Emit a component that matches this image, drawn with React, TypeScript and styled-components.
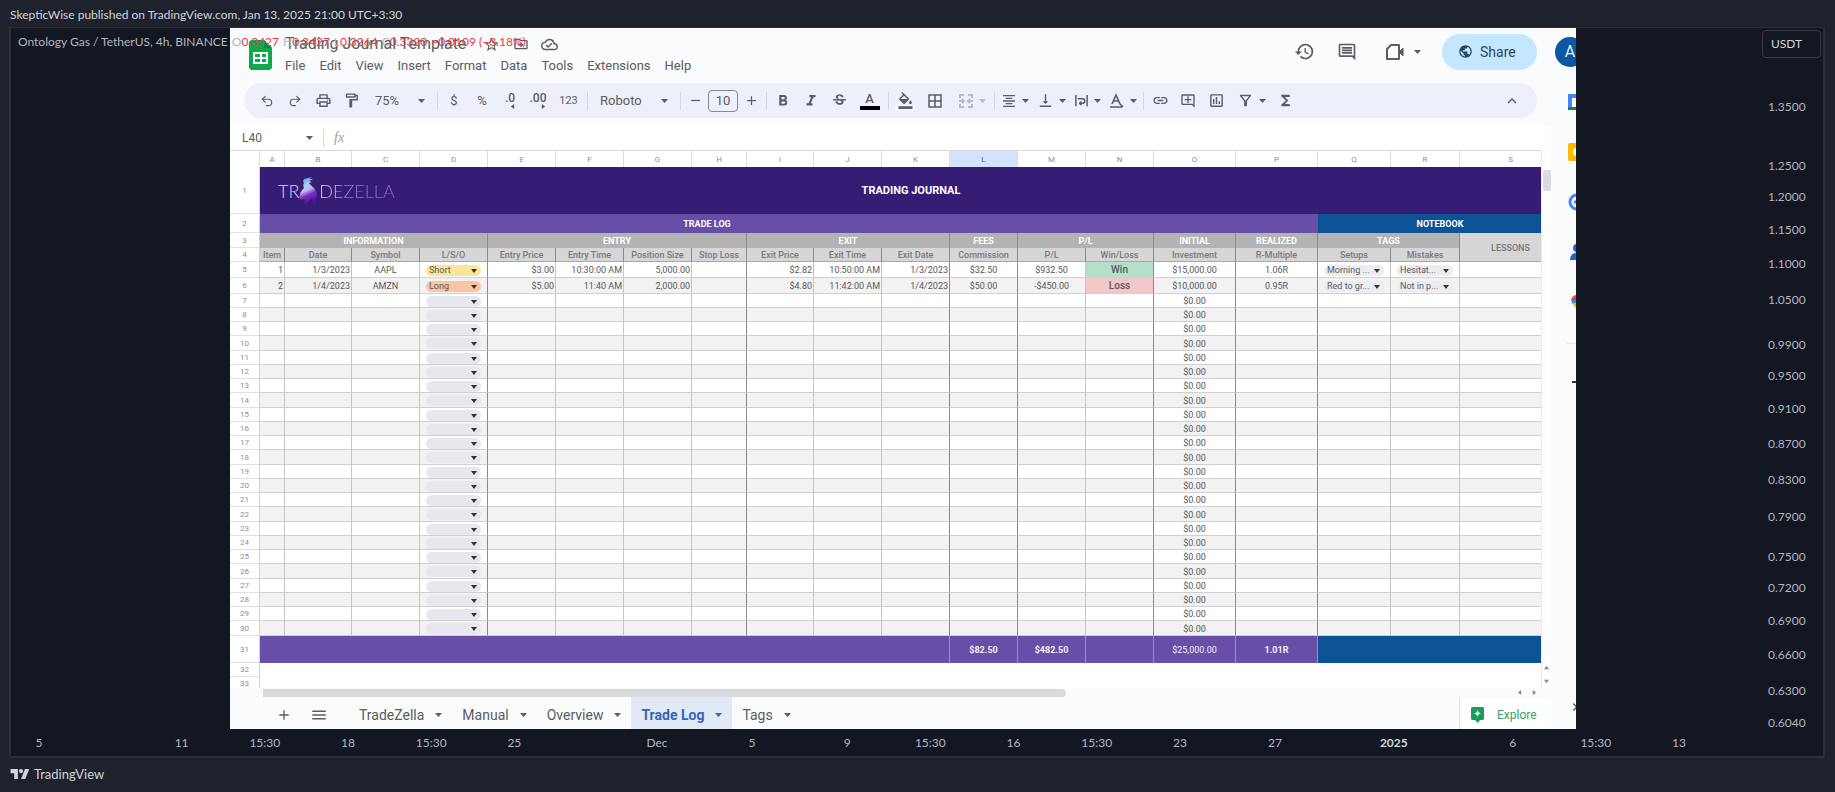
import React from "react";
import styled, { createGlobalStyle, css } from "styled-components";
import { Undo2, Redo2 } from "lucide-react";
import {
  MdOutlinePrint,
  MdOutlineFormatPaint,
  MdStrikethroughS,
  MdFormatBold,
  MdFormatItalic,
  MdFormatColorFill,
  MdBorderAll,
  MdFormatAlignCenter,
  MdVerticalAlignBottom,
  MdInsertLink,
  MdOutlineAddComment,
  MdOutlineInsertChart,
  MdOutlineFilterAlt,
  MdFunctions,
  MdKeyboardArrowUp,
  MdChevronRight,
  MdHistory,
  MdOutlineComment,
  MdPublic,
  MdStarBorder,
  MdOutlineDriveFileMove,
  MdOutlineCloudDone,
  MdAdd,
  MdRemove,
  MdMenu,
} from "react-icons/md";

const GlobalStyle = createGlobalStyle`
  * { box-sizing: border-box; }
  body { margin: 0; background: #1e222d; }
  button, input, select { font: inherit; color: inherit; margin: 0; }
`;

/* ---------- Chart page ---------- */

const Page = styled.div`
  display: flex;
  flex-direction: column;
  min-height: 100vh;
  color: #b2b5be;
  background: #1e222d;
  font: 12px/16px Lato, sans-serif;
`;

const PublishedBy = styled.header`
  height: 27px;
  padding: 7px 10px 0;
  color: #d1d4dc;
  white-space: nowrap;
`;

const Frame = styled.main`
  position: relative;
  margin: 0 10px 0 9px;
  border: 2px solid #2a2e39;
  border-top-width: 1px;
  background: #131722;
`;

const Plot = styled.div`
  display: grid;
  grid-template-columns: 219px minmax(0, 1fr) 247px;
`;

const Legend = styled.div`
  position: absolute;
  top: 6px;
  left: 7px;
  display: flex;
  gap: 4px;
  white-space: nowrap;
`;

const Red = styled.span`
  color: #f23645;
`;

const PriceScale = styled.aside`
  grid-column: 3;
  display: flex;
  flex-direction: column;
  align-items: flex-end;
`;

const CurrencyButton = styled.button`
  width: 59px;
  height: 28px;
  margin: 2px 2px 0 0;
  padding: 0 8px;
  border: 1px solid #363a45;
  border-radius: 4px;
  background: none;
  color: #d1d4dc;
  text-align: left;
`;

const Prices = styled.div`
  flex: 1;
  display: flex;
  flex-direction: column;
  width: 61px;
  padding: 49px 0 6px 6px;
`;

const PriceTick = styled.div<{ $gap: number }>`
  flex: ${(p) => p.$gap} 1 0;
  display: flex;
  align-items: flex-end;
  min-height: 0;

  span {
    display: flex;
    align-items: center;
    height: 0;
  }
`;

const TimeScale = styled.div`
  display: flex;
  align-items: center;
  height: 27px;
  padding: 0 144px 0 28px;
`;

const TimeTick = styled.div<{ $gap: number; $strong?: boolean }>`
  flex: ${(p) => p.$gap} 1 0;
  display: flex;
  justify-content: flex-end;
  min-width: 0;
  ${(p) => p.$strong && "color: #d1d4dc; font-weight: 700;"}

  span {
    display: flex;
    justify-content: center;
    width: 0;
    white-space: nowrap;
  }
`;

const Footer = styled.footer`
  display: flex;
  align-items: center;
  gap: 4px;
  padding: 8px 10px;
  color: #d1d4dc;
  font-size: 13px;
`;

/* ---------- Spreadsheet window ---------- */

const Sheet = styled.section`
  grid-column: 2;
  display: flex;
  flex-direction: column;
  overflow: hidden;
  background: #fafbfc;
  color: #5a5d61;
  font: 13px/16px Roboto, sans-serif;
`;

const TopBar = styled.div`
  display: flex;
  height: 55px;
  padding-left: 19px;
  overflow: hidden;
`;

const SheetsLogo = styled.svg`
  flex: none;
  width: 23px;
  height: 30px;
  margin: 12px 13px 0 0;
`;

const Titles = styled.div`
  flex: 1;
  min-width: 0;
`;

const TitleRow = styled.div`
  display: flex;
  align-items: center;
  height: 20px;
  margin-top: 6px;
`;

const Title = styled.h1`
  margin: 0 11px 0 0;
  font-size: 16px;
  font-weight: 400;
  line-height: 20px;
  white-space: nowrap;
`;

const TitleIcon = styled.button`
  display: grid;
  place-items: center;
  width: 29px;
  padding: 0;
  border: 0;
  background: none;
`;

const Menus = styled.nav`
  display: flex;
  gap: 14px;
  margin-top: 4px;
`;

const MenuButton = styled.button`
  padding: 0;
  border: 0;
  background: none;
`;

const Account = styled.div`
  flex: none;
  display: flex;
  align-items: center;
  width: 293px;
  height: 47px;
`;

const AccountButton = styled.button<{ $w: number }>`
  flex: none;
  display: flex;
  align-items: center;
  justify-content: center;
  gap: 9px;
  width: ${(p) => p.$w}px;
  padding: 0;
  border: 0;
  background: none;
`;

const ShareButton = styled.button`
  flex: none;
  display: flex;
  align-items: center;
  gap: 7px;
  width: 95px;
  height: 36px;
  margin: 0 18px 0 5px;
  padding: 0 0 0 16px;
  border: 0;
  border-radius: 18px;
  background: #c2e7ff;
  color: #2b4560;
  font-size: 14px;
`;

const Avatar = styled.button`
  flex: none;
  width: 30px;
  height: 30px;
  padding: 0;
  border: 0;
  border-radius: 50%;
  background: #0b57a0;
  color: #e4eefa;
  font-size: 16px;
`;

const Workspace = styled.div`
  flex: 1;
  display: grid;
  grid-template-columns: minmax(0, 1fr) 25px;
`;

const Editor = styled.div`
  min-width: 0;
`;

const Toolbar = styled.div`
  display: flex;
  align-items: center;
  height: 35px;
  margin: 0 14px 7px;
  padding: 0 11px 0 9px;
  border-radius: 18px;
  background: #edf0fa;
`;

const Tool = styled.button<{ $w?: number; $push?: boolean; $faint?: boolean }>`
  flex: none;
  display: flex;
  align-items: center;
  justify-content: center;
  gap: 5px;
  width: ${(p) => p.$w ?? 28}px;
  height: 28px;
  padding: 0;
  border: 0;
  background: none;
  ${(p) => p.$push && "margin-left: auto;"}
  ${(p) => p.$faint && "opacity: 0.35;"}
`;

const Picker = styled.button<{ $w: number }>`
  flex: none;
  display: flex;
  align-items: center;
  justify-content: space-between;
  width: ${(p) => p.$w}px;
  padding: 0 10px;
  border: 0;
  background: none;
`;

const Divider = styled.span`
  flex: none;
  width: 1px;
  height: 18px;
  margin: 0 2px;
  background: #d5d8e0;
`;

const SizeInput = styled.input`
  flex: none;
  width: 30px;
  height: 22px;
  padding: 0;
  border: 1px solid #85888d;
  border-radius: 4px;
  background: none;
  text-align: center;
`;

const Swatch = styled.span<{ $colour: string }>`
  display: grid;
  justify-items: center;
  width: 20px;
  height: 18px;
  border-bottom: 4px solid ${(p) => p.$colour};
  font-size: 13px;
  font-weight: 500;
  line-height: 14px;
`;

const Decimals = styled.span`
  display: grid;
  justify-items: end;
  font-size: 12px;
  font-weight: 500;
  line-height: 11px;
`;

const FormulaBar = styled.div`
  display: flex;
  align-items: center;
  gap: 8px;
  height: 25px;
  padding-left: 12px;
  background: #fff;
`;

const NameBox = styled.input`
  width: 56px;
  padding: 0;
  border: 0;
  background: none;
  font-size: 12px;
`;

const Fx = styled.label`
  color: #9a9da1;
  font: italic 14px/16px "Liberation Serif", serif;
`;

const FormulaInput = styled.input`
  flex: 1;
  min-width: 0;
  border: 0;
  background: none;
`;

const GridArea = styled.div`
  display: flex;
  height: 538px;
`;

const GridClip = styled.div`
  flex: 1;
  min-width: 0;
  overflow: hidden;
`;

const VerticalScroll = styled.div`
  display: flex;
  flex-direction: column;
  align-items: center;
  gap: 9px;
  width: 10px;
  padding: 20px 0 4px;
  border-left: 1px solid #ececee;
  background: #fdfdfd;
  color: #8a8d91;
`;

const VerticalThumb = styled.span`
  width: 8px;
  height: 21px;
  margin-bottom: auto;
  border-radius: 2px;
  background: #dadbe2;
`;

const HorizontalScroll = styled.div`
  display: flex;
  align-items: center;
  gap: 10px;
  height: 9px;
  padding: 0 14px 0 33px;
  color: #8a8d91;
`;

const HorizontalThumb = styled.span`
  width: 63%;
  height: 8px;
  margin-right: auto;
  border-radius: 0 4px 4px 0;
  background: #dadbdf;
`;

const Table = styled.table`
  width: calc(100% + 21px);
  border-collapse: separate;
  border-spacing: 0;
  table-layout: fixed;
  color: #55585c;
  font-size: 9px;
  line-height: 12px;

  th,
  td {
    padding: 1px 1px 0;
    overflow: hidden;
    text-align: center;
    white-space: nowrap;
    font-weight: 400;
  }
`;

const LetterRow = styled.tr`
  height: 17px;
  background: #fff;
  color: #8c8f93;
  font-size: 8px;
`;

const Letter = styled.th<{ $active?: boolean }>`
  border-top: 1px solid #d9dadc;
  border-right: 1px solid #dcdddf;
  ${(p) => p.$active && "background: #d3e3fd; color: #2f5a96;"}
`;

const RowNumber = styled.th`
  border-right: 1px solid #d0d1d3;
  border-bottom: 1px solid #e0e1e3;
  background: #fff;
  color: #8c8f93;
  font-size: 8px;
`;

const Row = styled.tr<{ $h: number; $shade?: boolean }>`
  height: ${(p) => p.$h}px;
  background: ${(p) => (p.$shade ? "#f2f2f2" : "#fff")};
`;

const Banner = styled.th<{ $bg: string }>`
  && {
    background: ${(p) => p.$bg};
    color: #fff;
    font-weight: 700;
  }
`;

const BrandRow = styled.div`
  display: grid;
  grid-template-columns: 1fr auto 1fr;
  align-items: center;
  font-size: 11px;
`;

const edge = css<{ $strong?: boolean }>`
  border-right: 1px solid ${(p) => (p.$strong ? "#8a8a8a" : "#c4c4c6")};
`;

const Group = styled.th<{ $strong?: boolean }>`
  ${edge}
  && {
    background: #b3b3b3;
    color: #fff;
    font-weight: 700;
  }
`;

const Heading = styled.th<{ $strong?: boolean }>`
  ${edge}
  && {
    padding: 1px 0 0;
    border-bottom: 1px solid #a9a9a9;
    background: #d6d6d6;
    color: #77797c;
    font-weight: 500;
  }
`;

const Cell = styled.td<{ $strong?: boolean; $right?: boolean; $bg?: string }>`
  ${edge}
  border-bottom: 1px solid #d0d0d3;
  && {
    ${(p) => p.$right && "text-align: right;"}
    ${(p) => p.$bg && `background: ${p.$bg}; font-size: 10px; font-weight: 500;`}
  }
`;

const Total = styled.td<{ $bg: string; $line?: boolean; $bold?: boolean }>`
  && {
    border-right: 1px solid ${(p) => (p.$line ? "#9d8cc9" : p.$bg)};
    background: ${(p) => p.$bg};
    color: #f1eef8;
    font-weight: ${(p) => (p.$bold ? 700 : 400)};
  }
`;

const Chip = styled.span<{ $bg: string }>`
  position: relative;
  display: block;
  height: 11px;
  margin: 0 5px;
  border-radius: 6px;
  background: ${(p) => p.$bg};

  select {
    display: block;
    width: 100%;
    height: 11px;
    padding: 0 0 0 3px;
    border: 0;
    background: none;
    appearance: none;
    line-height: 11px;
  }

  svg {
    position: absolute;
    top: 4px;
    right: 4px;
    color: #333;
    pointer-events: none;
  }
`;

const Wordmark = styled.span`
  display: flex;
  align-items: center;
  padding-left: 17px;
  color: #dccdf3;
  font: 300 18px/28px Lato, sans-serif;
`;

const Fade = styled.span`
  background: linear-gradient(90deg, #eadcf8, #c7b4ee 20%, #7c8fe0 36%, #7a78d4 65%, #9a66d2);
  background-clip: text;
  color: transparent;
`;

const SheetTabs = styled.nav`
  display: flex;
  align-items: center;
  height: 32px;
  padding-left: 40px;
  font-size: 14px;
`;

const TabIcon = styled.button`
  display: grid;
  place-items: center;
  width: 28px;
  height: 32px;
  margin-right: 7px;
  padding: 4px 0 0;
  border: 0;
  background: none;
`;

const TabList = styled.div`
  display: flex;
  margin-left: 9px;
`;

const Tab = styled.button<{ $active?: boolean }>`
  display: flex;
  align-items: center;
  gap: 11px;
  height: 32px;
  padding: 4px 10px 0;
  border: 0;
  background: ${(p) => (p.$active ? "#e1e9f7" : "none")};
  ${(p) => p.$active && "color: #3565b8; font-weight: 700;"}
`;

const Explore = styled.button`
  display: flex;
  align-items: center;
  gap: 13px;
  width: 92px;
  height: 32px;
  margin-left: auto;
  padding: 4px 0 0 11px;
  border: 0;
  border-left: 1px solid #dcdddf;
  background: #fff;
  color: #34a06c;
  font-size: 12px;
`;

const SidePanel = styled.aside`
  display: flex;
  flex-direction: column;
  align-items: flex-start;
  padding: 10px 0 14px 16px;
  overflow: hidden;
`;

const SideApps = styled.div`
  display: grid;
  gap: 32px;
`;

const SideRule = styled.hr`
  width: 20px;
  margin: 32px 0 26px;
  border: 0;
  border-top: 1px solid #e3e4e6;
`;

const SideToggle = styled.button`
  margin-top: auto;
  padding: 0;
  border: 0;
  background: none;

  svg {
    display: block;
  }
`;

/* ---------- Drawings ---------- */

const Caret = ({ size = 7 }: { size?: number }) => (
  <svg width={size} height={4} viewBox="0 0 8 4" preserveAspectRatio="none" fill="currentColor" aria-hidden>
    <path d="M0 0h8L4 4z" />
  </svg>
);

const Arrow = ({ turn }: { turn: number }) => (
  <svg width="5" height="5" viewBox="0 0 6 6" fill="currentColor" aria-hidden>
    <path d="M0 5h6L3 1z" transform={`rotate(${turn} 3 3)`} />
  </svg>
);

const MergeIcon = () => (
  <svg width="16" height="16" viewBox="0 0 16 16" fill="none" stroke="currentColor" strokeWidth="2" aria-hidden>
    <path d="M6 2H2v3M10 2h4v3M6 14H2v-3M10 14h4v-3M1 8h5M15 8h-5M4 6l2 2-2 2M12 6l-2 2 2 2" />
  </svg>
);

const WrapIcon = () => (
  <svg width="15" height="15" viewBox="0 0 16 16" fill="none" stroke="currentColor" strokeWidth="1.6" aria-hidden>
    <path d="M2 2v12M14 2v12M4 6h5a2.500 2.500 0 0 1 0 5H6M8 9l-2 2 2 2" />
  </svg>
);

const RotateIcon = () => (
  <svg width="16" height="16" viewBox="0 0 16 16" fill="none" stroke="currentColor" strokeWidth="1.6" aria-hidden>
    <path d="M3 11L7 2l4 9M4.500 8h5M1 14h12M11 11l3 3" />
  </svg>
);

const VideoIcon = () => (
  <svg width="20" height="18" viewBox="0 0 20 18" fill="none" stroke="currentColor" strokeWidth="2" aria-hidden>
    <path d="M6 2h8v14H2V6z" strokeLinejoin="round" />
    <path d="M15 8l3-3v8l-3-3z" fill="currentColor" strokeWidth="1" />
  </svg>
);

const TradingViewMark = () => (
  <svg width="20" height="10" viewBox="0 0 36 19" fill="#d1d4dc" aria-hidden>
    <path d="M14 19H7V8H0V0h14zM28 19h-8l7.500-19h8z" />
    <circle cx="20" cy="4" r="4" />
  </svg>
);

const Figure = () => (
  <svg width="20" height="28" viewBox="0 0 20 28" aria-hidden>
    <defs>
      <linearGradient id="figure" x1="0" y1="0" x2="0.3" y2="1">
        <stop offset="0" stopColor="#3a86dc" />
        <stop offset="0.35" stopColor="#a9cdf5" />
        <stop offset="0.55" stopColor="#c6bff2" />
        <stop offset="0.75" stopColor="#7b2fc4" />
        <stop offset="1" stopColor="#4d1c98" />
      </linearGradient>
    </defs>
    <path
      fill="url(#figure)"
      d="M5 2l8-2-3 2 4 0-4 2 3 1-3 1c1 2 3 3 5 5 2 2 3 5 3 9l-2 1 1 6h-2l-2-5-3 1-2 4H5l1-5-4 1c-2-1-2-3-1-5 0-3 2-5 4-7-1-2-1-4 0-5l-1-2z"
    />
  </svg>
);

const ExploreIcon = () => (
  <svg width="13" height="16" viewBox="0 0 13 16" aria-hidden>
    <path fill="#1b9c5a" d="M1 0h11l1 1v11l-1 1H9l-2 3-3-3H1l-1-1V1z" />
    <path fill="#fff" d="M6.500 3l1 2.500 2.500 1-2.500 1-1 2.500-1-2.500-2.500-1 2.500-1z" />
  </svg>
);

/* ---------- Data ---------- */

const quotes = [
  ["O", "0.3427"],
  ["H", "0.3427"],
  ["L", "0.3264"],
  ["C", "0.3320"],
];

const prices = [
  1.35, 1.25, 1.2, 1.15, 1.1, 1.05, 0.99, 0.95, 0.91, 0.87, 0.83, 0.79, 0.75, 0.72, 0.69, 0.66, 0.63, 0.604,
];

const times: [string, number][] = [
  ["5", 0], ["11", 12], ["15:30", 7], ["18", 7], ["15:30", 7], ["25", 7], ["Dec", 12], ["5", 8], ["9", 8],
  ["15:30", 7], ["16", 7], ["15:30", 7], ["23", 7], ["27", 8], ["2025", 10], ["6", 10], ["15:30", 7], ["13", 7],
];

const menus = ["File", "Edit", "View", "Insert", "Format", "Data", "Tools", "Extensions", "Help"];
const tabs = ["TradeZella", "Manual", "Overview", "Trade Log", "Tags"];

const letters = "ABCDEFGHIJKLMNOPQRS".split("");
const widths = [30, 25, 67, 68, 68, 68, 68, 68, 55, 67, 68, 68, 68, 68, 68, 82, 82, 73, 69, 102];
const strongEdges = "DHKLNOP";
const rightAligned = "ABEFGHIJK";

const groups: [string, number][] = [
  ["INFORMATION", 4], ["ENTRY", 4], ["EXIT", 3], ["FEES", 1], ["P/L", 2], ["INITIAL", 1], ["REALIZED", 1], ["TAGS", 2],
];

const headings = [
  "Item", "Date", "Symbol", "L/S/O", "Entry Price", "Entry Time", "Position Size", "Stop Loss", "Exit Price",
  "Exit Time", "Exit Date", "Commission", "P/L", "Win/Loss", "Investment", "R-Multiple", "Setups", "Mistakes",
];

const trades = [
  ["1", "1/3/2023", "AAPL", "Short", "$3.00", "10:30:00 AM", "5,000.00", "", "$2.82", "10:50:00 AM", "1/3/2023",
    "$32.50", "$932.50", "Win", "$15,000.00", "1.06R", "Morning ...", "Hesitat...", ""],
  ["2", "1/4/2023", "AMZN", "Long", "$5.00", "11:40 AM", "2,000.00", "", "$4.80", "11:42:00 AM", "1/4/2023",
    "$50.00", "-$450.00", "Loss", "$10,000.00", "0.95R", "Red to gr...", "Not in p...", ""],
];

const blankTrade = letters.map((letter) => (letter === "O" ? "$0.00" : ""));
const logRows = [...trades, ...Array.from({ length: 24 }, () => blankTrade)];

const chipColours: Record<string, string> = { Short: "#fde49b", Long: "#fbc5a2", "": "#e7e7ee" };
const resultColours: Record<string, string> = { Win: "#b4dfc9", Loss: "#f2c7c9" };

const INDIGO = "#351c75";
const PURPLE = "#674ea7";
const BLUE = "#0b5394";

/* Most log rows are 14px tall, with a 15px one closing each run of four. */
const rowHeight = (index: number) => (index < 2 ? 16 : (index - 1) % 4 === 0 ? 15 : 14);

/* ---------- Parts ---------- */

const ChipSelect = ({ value, label, bg }: { value: string; label: string; bg: string }) => (
  <Chip $bg={bg}>
    <select aria-label={label} defaultValue={value}>
      <option value={value}>{value}</option>
    </select>
    <Caret size={6} />
  </Chip>
);

const LogCell = ({ letter, value, row }: { letter: string; value: string; row: number }) => {
  const strong = strongEdges.includes(letter);
  if (letter === "D") {
    return (
      <Cell $strong={strong}>
        <ChipSelect value={value} label={`Side, row ${row}`} bg={chipColours[value]} />
      </Cell>
    );
  }
  if ((letter === "Q" || letter === "R") && value) {
    return (
      <Cell>
        <ChipSelect value={value} label={`Tag ${letter}, row ${row}`} bg="#ededf1" />
      </Cell>
    );
  }
  return (
    <Cell $strong={strong} $right={rightAligned.includes(letter)} $bg={resultColours[value]}>
      {value}
    </Cell>
  );
};

const TradeLog = () => (
  <Table>
    <colgroup>
      {widths.map((width, i) => (
        <col key={i} width={width} />
      ))}
    </colgroup>
    <thead>
      <LetterRow>
        <Letter aria-label="Corner" />
        {letters.map((letter) => (
          <Letter key={letter} $active={letter === "L"}>{letter}</Letter>
        ))}
      </LetterRow>
    </thead>
    <tbody>
      <Row $h={47}>
        <RowNumber>1</RowNumber>
        <Banner $bg={INDIGO} colSpan={19}>
          <BrandRow>
            <Wordmark>
              TR
              <Figure />
              <Fade>DEZELLA</Fade>
            </Wordmark>
            TRADING JOURNAL
          </BrandRow>
        </Banner>
      </Row>
      <Row $h={19}>
        <RowNumber>2</RowNumber>
        <Banner $bg={PURPLE} colSpan={14}>TRADE LOG</Banner>
        <Banner $bg={PURPLE} colSpan={2} />
        <Banner $bg={BLUE} colSpan={3}>NOTEBOOK</Banner>
      </Row>
      <Row $h={15}>
        <RowNumber>3</RowNumber>
        {groups.map(([name, span]) => (
          <Group key={name} colSpan={span} $strong>{name}</Group>
        ))}
        <Heading rowSpan={2}>LESSONS</Heading>
      </Row>
      <Row $h={14}>
        <RowNumber>4</RowNumber>
        {headings.map((name, i) => (
          <Heading key={name + i} $strong>{name}</Heading>
        ))}
      </Row>
      {logRows.map((trade, i) => (
        <Row key={i} $h={rowHeight(i)} $shade={i % 2 === 1}>
          <RowNumber>{i + 5}</RowNumber>
          {trade.map((value, c) => (
            <LogCell key={c} letter={letters[c]} value={value} row={i + 5} />
          ))}
        </Row>
      ))}
      <Row $h={27}>
        <RowNumber>31</RowNumber>
        <Total $bg={PURPLE} $line colSpan={11} />
        <Total $bg={PURPLE} $line $bold>$82.50</Total>
        <Total $bg={PURPLE} $line $bold>$482.50</Total>
        <Total $bg={PURPLE} $line />
        <Total $bg={PURPLE} $line>$25,000.00</Total>
        <Total $bg={PURPLE} $line $bold>1.01R</Total>
        <Total $bg={BLUE} colSpan={3} />
      </Row>
      <Row $h={14}>
        <RowNumber>32</RowNumber>
        <td colSpan={19} />
      </Row>
      <Row $h={14}>
        <RowNumber>33</RowNumber>
        <td colSpan={19} />
      </Row>
    </tbody>
  </Table>
);

const FormatToolbar = () => (
  <Toolbar role="toolbar" aria-label="Formatting">
    <Tool aria-label="Undo"><Undo2 size={14} /></Tool>
    <Tool aria-label="Redo"><Redo2 size={14} /></Tool>
    <Tool aria-label="Print"><MdOutlinePrint size={17} /></Tool>
    <Tool aria-label="Paint format"><MdOutlineFormatPaint size={17} /></Tool>
    <Picker $w={70}>75%<Caret /></Picker>
    <Divider />
    <Tool>$</Tool>
    <Tool>%</Tool>
    <Tool aria-label="Decrease decimals"><Decimals>.0<Arrow turn={-90} /></Decimals></Tool>
    <Tool aria-label="Increase decimals"><Decimals>.00<Arrow turn={90} /></Decimals></Tool>
    <Tool $w={33}><small>123</small></Tool>
    <Divider />
    <Picker $w={88}>Roboto<Caret /></Picker>
    <Divider />
    <Tool $w={25} aria-label="Smaller"><MdRemove size={15} /></Tool>
    <SizeInput aria-label="Font size" defaultValue="10" />
    <Tool $w={26} aria-label="Larger"><MdAdd size={15} /></Tool>
    <Divider />
    <Tool aria-label="Bold"><MdFormatBold size={18} /></Tool>
    <Tool aria-label="Italic"><MdFormatItalic size={18} /></Tool>
    <Tool aria-label="Strikethrough"><MdStrikethroughS size={17} /></Tool>
    <Tool $w={33} aria-label="Text colour"><Swatch $colour="#000">A</Swatch></Tool>
    <Divider />
    <Tool aria-label="Fill colour"><Swatch $colour="#fff"><MdFormatColorFill size={17} /></Swatch></Tool>
    <Tool $w={32} aria-label="Borders"><MdBorderAll size={18} /></Tool>
    <Tool $w={41} $faint aria-label="Merge cells"><MergeIcon /><Caret /></Tool>
    <Divider />
    <Tool $w={36} aria-label="Align"><MdFormatAlignCenter size={16} /><Caret /></Tool>
    <Tool $w={36} aria-label="Vertical align"><MdVerticalAlignBottom size={17} /><Caret /></Tool>
    <Tool $w={36} aria-label="Wrap"><WrapIcon /><Caret /></Tool>
    <Tool $w={36} aria-label="Rotate"><RotateIcon /><Caret /></Tool>
    <Divider />
    <Tool aria-label="Link"><MdInsertLink size={17} /></Tool>
    <Tool aria-label="Comment"><MdOutlineAddComment size={16} /></Tool>
    <Tool aria-label="Chart"><MdOutlineInsertChart size={17} /></Tool>
    <Tool $w={42} aria-label="Filter"><MdOutlineFilterAlt size={17} /><Caret /></Tool>
    <Tool $w={26} aria-label="Functions"><MdFunctions size={17} /></Tool>
    <Tool $push aria-label="Hide menus"><MdKeyboardArrowUp size={18} /></Tool>
  </Toolbar>
);

const SideIcons = () => (
  <SidePanel aria-label="Side panel">
    <SideApps>
      <svg width="18" height="18" viewBox="0 0 18 18" aria-hidden>
        <path fill="#4285f4" d="M1 1h16v16H1z" />
        <path fill="#fff" d="M5 5h10v9H5z" />
        <path fill="#188038" d="M1 14h16v3H1z" />
      </svg>
      <svg width="18" height="18" viewBox="0 0 18 18" aria-hidden>
        <rect x="1" width="17" height="18" rx="2" fill="#fbbc04" />
        <circle cx="10" cy="9" r="4" fill="#fff" />
      </svg>
      <svg width="18" height="18" viewBox="0 0 18 18" fill="none" stroke="#4285f4" strokeWidth="3" aria-hidden>
        <circle cx="10" cy="9" r="7" />
        <path d="M7 9h6" />
      </svg>
      <svg width="18" height="18" viewBox="0 0 18 18" fill="#1a66d2" aria-hidden>
        <circle cx="10" cy="5" r="4" />
        <path d="M3 17c0-5 3-7 7-7v7z" />
      </svg>
      <svg width="18" height="18" viewBox="0 0 18 18" aria-hidden>
        <path fill="#ea4335" d="M4 8a6 6 0 0 1 12 0z" />
        <path fill="#4285f4" d="M5 7h4v4H5z" />
        <path fill="#fbbc04" d="M5 10h9l-4 7z" />
      </svg>
    </SideApps>
    <SideRule />
    <MdAdd size={24} color="#333" />
    <SideToggle aria-label="Hide side panel"><MdChevronRight size={16} /></SideToggle>
  </SidePanel>
);

export default function App() {
  return (
    <>
      <GlobalStyle />
      <Page>
        <PublishedBy>SkepticWise published on TradingView.com, Jan 13, 2025 21:00 UTC+3:30</PublishedBy>
        <Frame>
          <Plot>
            <Sheet>
              <TopBar>
                <SheetsLogo viewBox="0 0 23 30" aria-hidden>
                  <path fill="#0fa84e" d="M2 0h13l8 8v20l-2 2H2l-2-2V2z" />
                  <path fill="#0b8a3e" d="M15 0l8 8h-8z" />
                  <path fill="none" stroke="#fff" strokeWidth="2" d="M5 13h13v10H5zM5 18h13M12 13v10" />
                </SheetsLogo>
                <Titles>
                  <TitleRow>
                    <Title>Trading Journal Template</Title>
                    <TitleIcon aria-label="Star"><MdStarBorder size={17} /></TitleIcon>
                    <TitleIcon aria-label="Move"><MdOutlineDriveFileMove size={16} /></TitleIcon>
                    <TitleIcon aria-label="Saved"><MdOutlineCloudDone size={17} /></TitleIcon>
                  </TitleRow>
                  <Menus>
                    {menus.map((name) => (
                      <MenuButton key={name}>{name}</MenuButton>
                    ))}
                  </Menus>
                </Titles>
                <Account>
                  <AccountButton $w={42} aria-label="History"><MdHistory size={21} /></AccountButton>
                  <AccountButton $w={44} aria-label="Comments"><MdOutlineComment size={20} /></AccountButton>
                  <AccountButton $w={68} aria-label="Meet"><VideoIcon /><Caret /></AccountButton>
                  <ShareButton><MdPublic size={15} />Share</ShareButton>
                  <Avatar>A</Avatar>
                </Account>
              </TopBar>
              <Workspace>
                <Editor>
                  <FormatToolbar />
                  <FormulaBar>
                    <NameBox aria-label="Name box" defaultValue="L40" />
                    <Caret />
                    <Divider />
                    <Fx htmlFor="formula">fx</Fx>
                    <FormulaInput id="formula" />
                  </FormulaBar>
                  <GridArea>
                    <GridClip><TradeLog /></GridClip>
                    <VerticalScroll>
                      <VerticalThumb />
                      <Arrow turn={0} />
                      <Arrow turn={180} />
                    </VerticalScroll>
                  </GridArea>
                  <HorizontalScroll>
                    <HorizontalThumb />
                    <Arrow turn={-90} />
                    <Arrow turn={90} />
                  </HorizontalScroll>
                  <SheetTabs>
                    <TabIcon aria-label="Add sheet"><MdAdd size={16} /></TabIcon>
                    <TabIcon aria-label="All sheets"><MdMenu size={18} /></TabIcon>
                    <TabList>
                      {tabs.map((name) => (
                        <Tab key={name} $active={name === "Trade Log"}>{name}<Caret /></Tab>
                      ))}
                    </TabList>
                    <Explore><ExploreIcon />Explore</Explore>
                  </SheetTabs>
                </Editor>
                <SideIcons />
              </Workspace>
            </Sheet>
            <PriceScale>
              <CurrencyButton>USDT</CurrencyButton>
              <Prices>
                {prices.map((price, i) => (
                  <PriceTick key={price} $gap={i ? Math.round(Math.log(prices[i - 1] / price) * 1000) : 0}>
                    <span>{price.toFixed(4)}</span>
                  </PriceTick>
                ))}
              </Prices>
            </PriceScale>
          </Plot>
          <TimeScale>
            {times.map(([label, gap], i) => (
              <TimeTick key={i} $gap={gap} $strong={label === "2025"}>
                <span>{label}</span>
              </TimeTick>
            ))}
          </TimeScale>
          <Legend>
            <span>Ontology Gas / TetherUS, 4h, BINANCE</span>
            {quotes.map(([name, value]) => (
              <span key={name}>{name}<Red>{value}</Red></span>
            ))}
            <Red>−0.0109 (−3.18%)</Red>
          </Legend>
        </Frame>
        <Footer><TradingViewMark />TradingView</Footer>
      </Page>
    </>
  );
}
